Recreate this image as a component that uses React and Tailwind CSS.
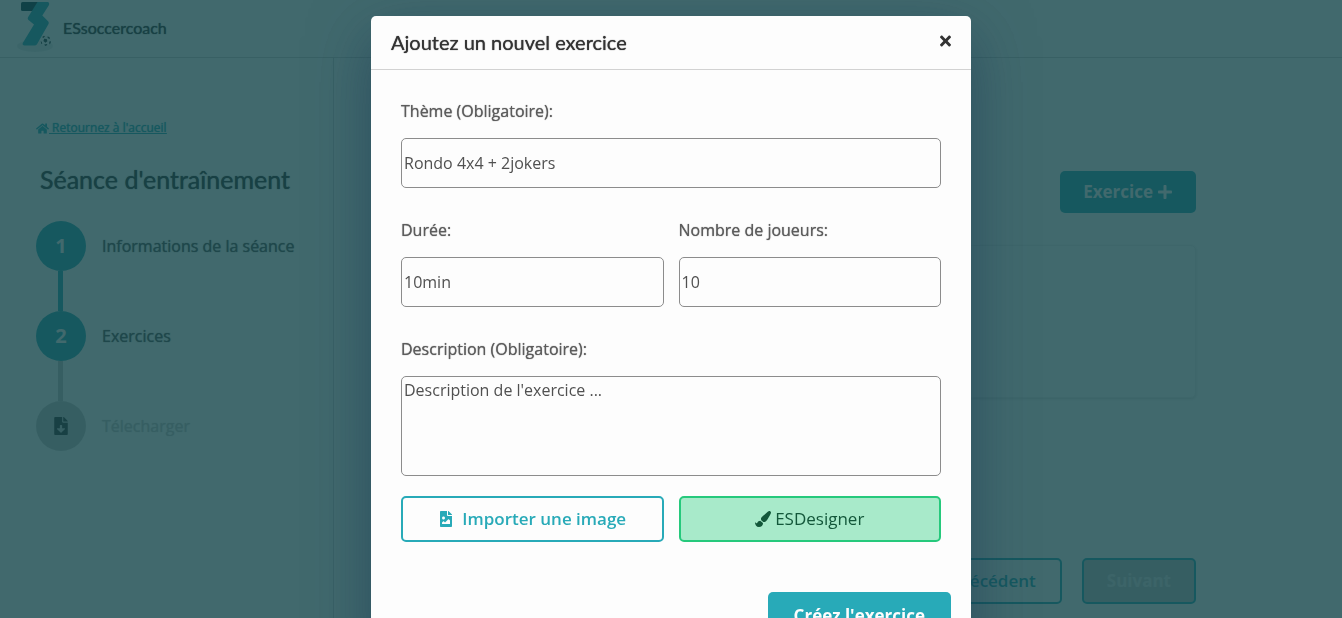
import React from "react";
import { FaHome, FaFileDownload, FaFileImage, FaPaintBrush, FaPlus, FaTimes } from "react-icons/fa";

const strong = "font-normal [text-shadow:0_0_1px_currentColor]";
const field =
  "block w-full rounded-[5px] border border-[#8c8c8c] bg-[#fdfdfd] px-0.5 text-base font-normal text-[#505050] outline-none";
const label = `block text-base leading-6 text-[#5c5c5c] ${strong}`;

function Logo() {
  return (
    <svg viewBox="0 0 40 52" className="h-[52px] w-10" aria-hidden="true">
      <ellipse cx="19" cy="46" rx="18" ry="6" fill="#e6ecec" />
      <path d="M6.500 2H24L17 11H6.500Q5 11 5 9.500V3.500Q5 2 6.500 2Z" fill="#0d3b44" />
      <path
        d="M21.500 2H31.500Q33.800 2.300 33 5L26.300 15.500L32.300 21.500Q33.200 22.600 32.500 24L21 44.200Q20.200 45.500 18.500 45.500H8.500Q6 45.200 6.800 43L18 24.500L12.200 19.800Q11.300 18.600 12 17.200Z"
        fill="#28aab8"
      />
      <circle cx="29.700" cy="40.700" r="5" fill="#f4f6f6" />
      <path
        d="M28.200 38.700l2.500.3.700 2.200-2 1.500-2-1.600ZM26.200 36.900l1.800-1.200 1 .8-1.800 1.500ZM31.700 36.200l2.300 1.500-.4 1.300-2-1ZM24.700 41.200l1 .5.600 2-1 .2ZM28.200 44.400l2.500-.3.800 1-2.300.8ZM33.200 41.700l1.500-.8v2l-1.300 1.500Z"
        fill="#26373a"
      />
    </svg>
  );
}

function Step({ active, marker, children }) {
  return (
    <li className="flex items-center gap-4">
      <span
        className={
          active
            ? "flex size-[50px] shrink-0 items-center justify-center rounded-full bg-[#28aab8] text-xl font-bold text-[#fdfdfd]"
            : "flex size-[50px] shrink-0 items-center justify-center rounded-full bg-[#c8c8c8] text-lg text-[#333]"
        }
      >
        {marker}
      </span>
      <span className={`text-base ${strong} ${active ? "text-[#555]" : "text-[#c8c8c8]"}`}>{children}</span>
    </li>
  );
}

function Page() {
  return (
    <div className="flex min-h-screen flex-col bg-[#fdfdfd]">
      <header className="flex h-[58px] items-start gap-[7px] border-b border-[#d2d2d2] pl-4">
        <Logo />
        <p className={`pt-4 font-[Lato] text-base leading-6 text-[#333] ${strong}`}>ESsoccercoach</p>
      </header>
      <div className="flex grow">
        <aside className="w-[334px] shrink-0 border-r border-[#d2d2d2] pt-[60px] pr-4 pl-9">
          <a href="#accueil" className="flex items-center text-xs leading-5 text-[#28aab8]">
            <FaHome className="size-[13px]" />
            <span className={`whitespace-pre underline ${strong}`}> Retournez à l'accueil</span>
          </a>
          <h1 className={`mt-[25px] pl-1 font-[Lato] text-[25px] leading-8 text-[#333] ${strong}`}>Séance d'entraînement</h1>
          <ol className="mt-[26px]">
            <Step active marker="1">Informations de la séance</Step>
            <li aria-hidden="true" className="ml-[22px] h-10 w-[5px] bg-[#28aab8]" />
            <Step active marker="2">Exercices</Step>
            <li aria-hidden="true" className="ml-[22px] h-10 w-[5px] bg-[#c8c8c8]" />
            <Step marker={<FaFileDownload />}>Télecharger</Step>
          </ol>
        </aside>
        <main className="grow pt-[113px] pb-3">
          <div className="mx-auto flex w-[716px] max-w-full flex-col">
            <button type="button" className="flex h-[42px] items-center gap-1 self-end rounded-[5px] bg-[#28aab8] px-[23px] text-[17px] font-bold text-[#fdfdfd]">
              Exercice <FaPlus className="size-4" />
            </button>
            <section className="mt-8 h-[153px] rounded-[5px] border border-[#ededed] shadow-sm" />
            <div className="mt-40 flex justify-end gap-5">
              <button type="button" className="h-[46px] rounded-[5px] border-2 border-[#28aab8] px-6 text-[17px] font-semibold text-[#28aab8]">
                Précédent
              </button>
              <button type="button" disabled className="h-[46px] rounded-[5px] border-2 border-[#28aab8] bg-[#c8c8c8] px-[23px] text-[17px] font-bold text-[#e6e6e6]">
                Suivant
              </button>
            </div>
          </div>
        </main>
      </div>
    </div>
  );
}

function ExerciseDialog() {
  return (
    <div className="fixed inset-0 overflow-hidden bg-[#124448]/80">
      <div
        role="dialog"
        aria-modal="true"
        aria-labelledby="dialog-title"
        className="mx-auto mt-4 w-[600px] max-w-full rounded-[5px] bg-[#fdfdfd] shadow-[0_20px_60px_rgba(20,50,80,0.5)]"
      >
        <div className="flex h-[54px] items-start justify-between border-b border-[#d2d2d2] px-5 pt-4">
          <h2 id="dialog-title" className={`font-[Lato] text-xl leading-5 text-[#333] ${strong}`}>Ajoutez un nouvel exercice</h2>
          <button type="button" aria-label="Fermer" className="text-[#333]">
            <FaTimes className="h-[18px] w-[11px]" />
          </button>
        </div>
        <form className="px-5 pt-[29px] pb-5">
          <div className="grid grid-cols-2 gap-x-[15px] gap-y-[30px] px-2.5">
            <div className="col-span-2">
              <label htmlFor="theme" className={label}>Thème (Obligatoire):</label>
              <input id="theme" type="text" defaultValue="Rondo 4x4 + 2jokers" className={`mt-[15px] h-[50px] ${field}`} />
            </div>
            <div>
              <label htmlFor="duree" className={label}>Durée:</label>
              <input id="duree" type="text" defaultValue="10min" className={`mt-[15px] h-[50px] ${field}`} />
            </div>
            <div>
              <label htmlFor="joueurs" className={label}>Nombre de joueurs:</label>
              <input id="joueurs" type="text" defaultValue="10" className={`mt-[15px] h-[50px] ${field}`} />
            </div>
            <div className="col-span-2">
              <label htmlFor="description" className={label}>Description (Obligatoire):</label>
              <textarea
                id="description"
                placeholder="Description de l'exercice ..."
                className={`mt-[15px] h-[100px] resize-none py-0.5 leading-[22px] placeholder:text-[#505050] ${field}`}
              />
            </div>
          </div>
          <div className="mt-5 grid grid-cols-2 gap-[15px] px-2.5">
            <button type="button" className="flex h-[46px] items-center justify-center gap-2 rounded-[5px] border-2 border-[#28aab8] text-[17px] font-semibold text-[#28aab8]">
              <FaFileImage className="size-4" /> Importer une image
            </button>
            <button type="button" className="flex h-[46px] items-center justify-center gap-1 rounded-[5px] border-2 border-[#26c97c] bg-[#a8eaca] text-[17px] font-medium text-[#13573a]">
              <FaPaintBrush className="size-4" /> ESDesigner
            </button>
          </div>
          <div className="mt-[50px] flex justify-end">
            <button type="submit" className="h-12 rounded-[5px] bg-[#28aab8] px-[26px] text-[17px] font-bold text-[#fdfdfd]">
              Créez l'exercice
            </button>
          </div>
        </form>
      </div>
    </div>
  );
}

export default function App() {
  return (
    <div className="font-['Open_Sans',sans-serif]">
      <Page />
      <ExerciseDialog />
    </div>
  );
}
